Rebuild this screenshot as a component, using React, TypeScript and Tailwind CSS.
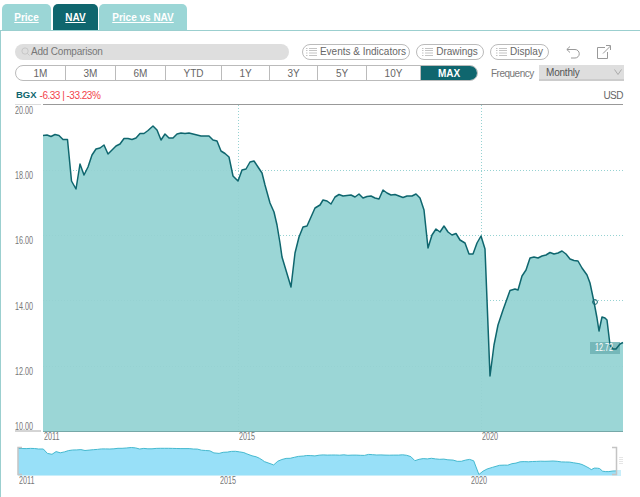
const P = "43,135.5 47,135 51,136.5 55,134.5 59,135.5 63,139.5 67.5,139.5 71.5,181 76,189 80,164 84,175 88,167 92,155 96,149 100,148 104,145 108,154 112,150 116,146 120,144 124,138.5 128,138.5 132,139.5 136,138 140,133.5 144,133.5 148,130.5 153,126 157,130 161,140 165,134 169,138 173,138 177,134 181,133 185,133.5 189,133 193,134 197,135 201,136 205,136 209,136 213,140 217,141 221,151 225,153.5 229,157 233,176 238,181 242,170 246,169 250,162 254,161 258,167 262,173 265,185 270,203 274,212 277,225 280,243 282,257 291,287 295,253 299,237 303,227 307,226 311,217 315,208 320,205 323,200 327,201 331,204 335,197 339,194.5 343,196 347,195.5 351,195 355,197 359,194 363,198 367,196.5 371,196 375,198 379,199 383,190 387,193 391,195 395,194.5 399,196 403,197.5 407,196 412,196 416,194 420,198 424,210 428,248 432,235 436,229 440,232 444,226 448,232 452,235 456,233.5 460,240 465,243 469,254 473,254 477,243 481,236 485,249 490,376 494,345 498,325 503,310 510,290.5 515,289 518,290 522,276 526,270 530,258 534,257 538,258 542,256 546,255 550,252.5 554,254 558,253 562,251 566,254 570,259 574,260.5 578,261 582,268 587,275 590,283 594,302 597,318 599,331 602,317 605,318 607,320 610,345 613,349 616,349 620,344 623,342.5";

const pts = P.split(" ").map((s) => s.split(",").map(Number));
const miniPts = pts.map(([x, y]) => [18 + ((x - 43) / 580) * 598, 447.5 + ((y - 126) / 250) * 27]);
const mini = miniPts.map((p) => p.map((n) => n.toFixed(1)).join(",")).join(" ");
const sans = "font-['Liberation_Sans',Arial,sans-serif]";
const narrow = "font-['Liberation_Sans',Arial,sans-serif] origin-left scale-x-[0.72] text-[#777]";

function MenuIcon() {
  return (
    <svg width="11" height="8" viewBox="0 0 11 8" fill="none" stroke="#c4c4c4" strokeWidth="1">
      <path d="M0 .5h1.5M3 .5h8M0 2.5h1.5M3 2.5h8M0 5h1.5M3 5h8M0 7.5h1.5M3 7.5h8" />
    </svg>
  );
}

function Pill({ label, width }: { label: string; width: string }) {
  return (
    <div className={`flex h-[16px] items-center justify-center gap-[3px] whitespace-nowrap rounded-full border border-[#bbb] text-[10px] text-[#666] ${width}`}>
      <MenuIcon />
      <span>{label}</span>
    </div>
  );
}

const ranges = [
  ["1M", "w-[50px]"], ["3M", "w-[50px]"], ["6M", "w-[50px]"], ["YTD", "w-[56px]"], ["1Y", "w-[48px]"],
  ["3Y", "w-[48px]"], ["5Y", "w-[49px]"], ["10Y", "w-[54px]"],
];

export default function App() {
  return (
    <div className={`relative h-[497px] w-[640px] overflow-hidden bg-white ${sans}`}>
      <div className="flex h-[30px] items-end pl-[2px]">
        <div className="flex h-[26px] w-[49px] items-center justify-center rounded-t-[5px] bg-[#9bd6d6] text-[10px] font-bold text-white underline">Price</div>
        <div className="ml-[2px] flex h-[26px] w-[45px] items-center justify-center rounded-t-[5px] bg-[#0f666e] text-[10px] font-bold text-white underline">NAV</div>
        <div className="ml-[1px] flex h-[26px] w-[88px] items-center justify-center rounded-t-[5px] bg-[#9bd6d6] text-[10px] font-bold text-white underline">Price vs NAV</div>
      </div>
      <div className="h-[467px] border-l border-t border-[#9bcfcf] pl-[14px] pt-[12px]">
        <div className="flex h-[17px] items-center">
          <div className="flex h-[16px] w-[274px] items-center gap-[1px] rounded-full bg-[#dedede] pl-[6px] text-[10px] tracking-[-0.2px] text-[#777]">
            <svg width="9" height="9" viewBox="0 0 10 10" fill="none" stroke="#c4c4c4"><circle cx="4.5" cy="4.5" r="3.5" /><path d="M7 7l2.5 2.5" /></svg>
            <span>Add Comparison</span>
          </div>
          <div className="ml-[13px]"><Pill label="Events & Indicators" width="w-[108px]" /></div>
          <div className="ml-[6px]"><Pill label="Drawings" width="w-[68px]" /></div>
          <div className="ml-[6px]"><Pill label="Display" width="w-[59px]" /></div>
          <svg className="ml-[17px]" width="14" height="14" viewBox="0 0 14 14" fill="none" stroke="#999"><path d="M1 4.5h8a4 4 0 0 1 0 8.5H5M4 1.5L.8 4.5 4 7.5" /></svg>
          <svg className="ml-[17px]" width="14" height="14" viewBox="0 0 14 14" fill="none" stroke="#999"><path d="M8 2.5H.5v11h10V7M6 8.5l7.5-7.5M9 .5h4.5V5" /></svg>
        </div>
        <div className="mt-[5px] flex h-[16px] items-center">
          <div className="flex h-[16px] w-[463px] overflow-hidden rounded-full border border-[#bbb] text-[10px] text-[#666]">
            {ranges.map(([r, w]) => (
              <div key={r} className={`flex items-center justify-center border-r border-[#bbb] ${w}`}>{r}</div>
            ))}
            <div className="flex flex-1 items-center justify-center bg-[#0f666e] font-bold text-white">MAX</div>
          </div>
          <span className="ml-[13px] w-[42px] whitespace-nowrap text-[10px] tracking-[-0.5px] text-[#777]">Frequency</span>
          <div className="ml-[6px] flex h-[16px] w-[85px] items-center justify-between border-b-2 border-[#ccc] bg-[#dedede] pl-[7px] pr-[2px] text-[10px] tracking-[-0.2px] text-[#555]">
            <span>Monthly</span>
            <svg width="8" height="6" viewBox="0 0 8 6" fill="none" stroke="#aaa"><path d="M.5.5L4 5.5 7.5.5" /></svg>
          </div>
        </div>
        <div className="mt-[8px] flex h-[13px] w-[608px] items-center text-[10px]">
          <span className="pl-[1px] text-[9.5px] font-bold text-[#0f666e]">BGX</span>
          <span className="ml-[3px] tracking-[-0.5px] text-[#f2434b]">-6.33 | -33.23%</span>
          <span className="ml-auto tracking-[-0.5px] text-[#666]">USD</span>
        </div>
      </div>

      <svg className="absolute left-0 top-0" width="640" height="497" viewBox="0 0 640 497">
        <path d="M43 104.5H623" stroke="#999" />
        <path d="M15 104.5H41" stroke="#ddd" />
        <path d="M15 431H41" stroke="#aaa" />
        {[170, 235, 300, 366].map((y) => (
          <path key={y} d={`M43 ${y}.5H623`} stroke="#eeeeee" strokeDasharray="1 2" />
        ))}
        {[238, 481].map((x) => (
          <path key={x} d={`M${x}.5 105V431`} stroke="#eeeeee" strokeDasharray="1 2" />
        ))}
        <polygon points={`43,431 ${P} 623,431`} fill="#9bd6d6" />
        {[170, 235, 300, 366].map((y) => (
          <path key={y} d={`M43 ${y}.5H623`} stroke="#96d2d2" strokeDasharray="1 2" />
        ))}
        {[238, 481].map((x) => (
          <path key={x} d={`M${x}.5 105V431`} stroke="#96d2d2" strokeDasharray="1 2" />
        ))}
        <rect x="590" y="342" width="30" height="12" fill="#6fb2b4" fillOpacity=".85" />
        <polyline points={P} fill="none" stroke="#0f666e" strokeWidth="1.5" strokeLinejoin="round" />
        <path d="M43 431.5H623" stroke="#76a8a8" />
        <circle cx="595" cy="302" r="2.4" fill="none" stroke="#0f666e" />
        <rect x="616" y="470" width="5" height="5" fill="#c8eefa" />
        <polygon points={`18,475 ${mini} 616,475`} fill="#98e0f8" />
        <path d="M18 475.5H621" stroke="#c8eefa" />
        <polyline points={mini} fill="none" stroke="#45b9cf" />
        <path d="M22 447.5H18V474.5H22M612 447.5H616.5V474.5H612" fill="none" stroke="#c4c4c4" strokeWidth="1.5" />
        <path d="M620 457v7M622 457v7" stroke="#ccc" strokeDasharray="1 1" />
      </svg>

      {([["20.00", 105], ["18.00", 170], ["16.00", 235], ["14.00", 301], ["12.00", 366], ["10.00", 421]] as [string, number][]).map(([t, y]) => (
        <span key={t} className={`absolute left-[15px] text-[10px] leading-[12px] ${narrow}`} style={{ top: y }}>{t}</span>
      ))}
      {([["2011", 44, 431], ["2015", 239, 431], ["2020", 482, 431], ["2011", 19, 475], ["2015", 220, 475], ["2020", 471, 475]] as [string, number, number][]).map(([t, x, y], i) => (
        <span key={i} className={`absolute text-[10px] leading-[12px] ${narrow}`} style={{ left: x, top: y }}>{t}</span>
      ))}
      <span className={`absolute left-[595px] top-[342px] origin-left scale-x-[0.72] text-[10px] leading-[12px] text-white ${sans}`}>12.72</span>
    </div>
  );
}
